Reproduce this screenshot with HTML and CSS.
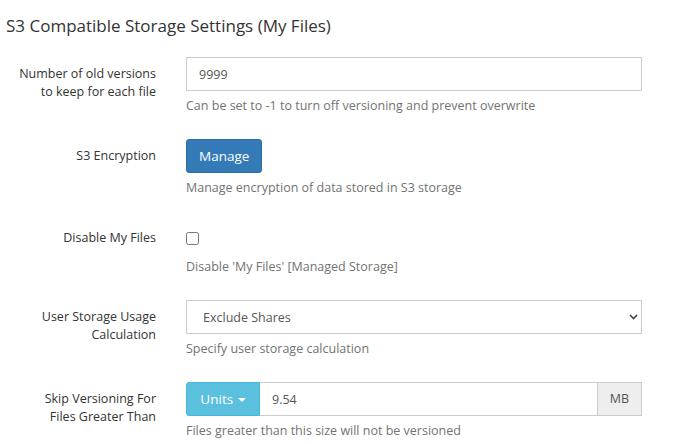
FILE: index.html
```
<!DOCTYPE html>
<html lang="en">
<head>
	<meta charset="UTF-8">
	<title>S3 Compatible Storage Settings</title>
	<link rel="stylesheet" href="styles.css">
</head>
<body>
	<div class="page">
		<h3 class="title">S3 Compatible Storage Settings (My Files)</h3>

		<div class="form-row">
			<label class="row-label">Number of old versions<br>to keep for each file</label>
			<div class="row-field">
				<input class="text-box" type="text" value="9999">
				<p class="help">Can be set to -1 to turn off versioning and prevent overwrite</p>
			</div>
		</div>

		<div class="form-row">
			<label class="row-label">S3 Encryption</label>
			<div class="row-field">
				<button class="btn btn-blue" type="button">Manage</button>
				<p class="help">Manage encryption of data stored in S3 storage</p>
			</div>
		</div>

		<div class="form-row">
			<label class="row-label">Disable My Files</label>
			<div class="row-field">
				<div class="check-wrap"><input type="checkbox"></div>
				<p class="help">Disable 'My Files' [Managed Storage]</p>
			</div>
		</div>

		<div class="form-row">
			<label class="row-label">User Storage Usage<br>Calculation</label>
			<div class="row-field">
				<div class="select-wrap">
					<select class="text-box pick">
						<option>Exclude Shares</option>
						<option>Include Shares</option>
					</select>
					<svg class="chev" width="9" height="6" viewBox="0 0 9 6"><path d="M1 1l3.5 3.5L8 1" fill="none" stroke="#444" stroke-width="1.6"/></svg>
				</div>
				<p class="help">Specify user storage calculation</p>
			</div>
		</div>

		<div class="form-row">
			<label class="row-label">Skip Versioning For<br>Files Greater Than</label>
			<div class="row-field">
				<div class="input-group">
					<button class="btn btn-info" type="button">Units <span class="caret"></span></button>
					<input class="text-box grow" type="text" value="9.54">
					<span class="addon">MB</span>
				</div>
				<p class="help">Files greater than this size will not be versioned</p>
			</div>
		</div>
	</div>
</body>
</html>
```

FILE: styles.css
```
*{
	box-sizing: border-box;
}
body{
	margin: 0;
	background: #fff;
	color: #333;
	font-family: "Open Sans", "Noto Sans", sans-serif;
	font-size: 12.5px;
}
.page{
	padding: 0 6px;
}
.title{
	font-size: 17px;
	font-weight: 400;
	line-height: 20px;
	margin: 16px 0 21px;
	color: #333;
}
.form-row{
	display: grid;
	grid-template-columns: 150px 456px;
	column-gap: 30px;
	margin-bottom: 15px;
}
.row-label{
	text-align: right;
	padding-top: 8px;
	line-height: 18px;
}
.help{
	margin: 6px 0 9px;
	line-height: 18px;
	color: #737373;
}
.text-box{
	display: block;
	width: 100%;
	height: 34px;
	padding: 6px 12px;
	border: 1px solid #ccc;
	border-radius: 0;
	font: inherit;
	color: #555;
	background: #fff;
}
.select-wrap{
	position: relative;
}
.pick{
	padding-left: 16px;
	appearance: none;
	-webkit-appearance: none;
}
.chev{
	position: absolute;
	right: 4px;
	top: 14px;
	pointer-events: none;
}
.btn{
	height: 34px;
	padding: 6px 12px;
	border: 1px solid transparent;
	border-radius: 3px;
	font: inherit;
	color: #fff;
	cursor: pointer;
}
.btn-blue{
	background: #337ab7;
	border-color: #2e6da4;
	width: 76px;
	font-size: 13.5px;
}
.btn-info{
	background: #5bc0de;
	border-color: #46b8da;
	border-radius: 3px 0 0 3px;
	width: 74px;
	font-size: 13.5px;
	flex: none;
}
.caret{
	display: inline-block;
	width: 0;
	height: 0;
	margin-left: 1px;
	vertical-align: middle;
	border-top: 4px solid #fff;
	border-left: 4px solid transparent;
	border-right: 4px solid transparent;
}
.check-wrap{
	height: 31px;
	padding-top: 11px;
}
.check-wrap input{
	display: block;
	width: 13px;
	height: 13px;
	margin: 0;
}
.input-group{
	display: flex;
}
.grow{
	flex: 1;
	border-left: 0;
}
.addon{
	flex: none;
	width: 44px;
	height: 34px;
	line-height: 32px;
	text-align: center;
	background: #eee;
	border: 1px solid #ccc;
	border-left: 0;
	color: #555;
}
```
